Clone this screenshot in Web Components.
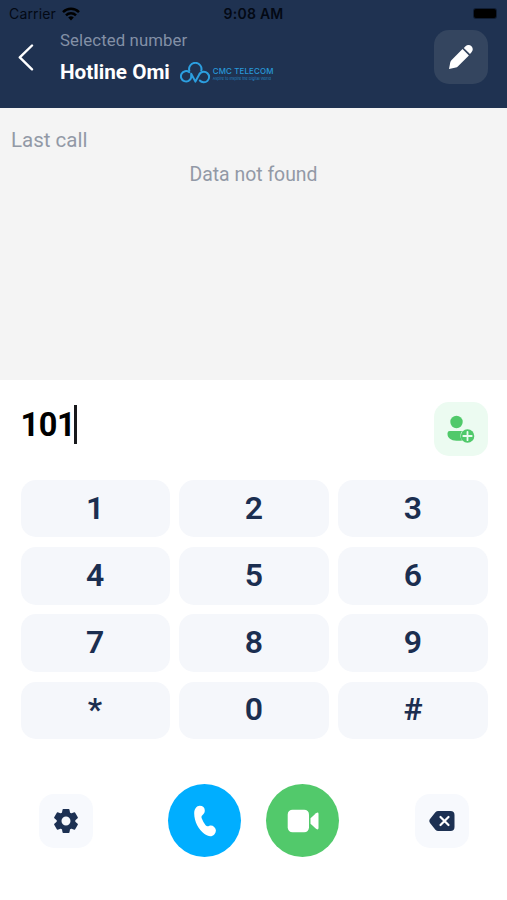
<!DOCTYPE html>
<html lang="en">
<head>
<meta charset="utf-8">
<title>Dialer</title>
<style>
body{margin:0;background:#fff;font-family:Roboto,"Liberation Sans",sans-serif}
</style>
</head>
<body>
<dialer-screen></dialer-screen>
<script>
const define = (name, css, html) => customElements.define(name, class extends HTMLElement {
  constructor() {
    super();
    const t = document.createElement('template');
    t.innerHTML = `<style>*{box-sizing:border-box}svg{display:block}${css}</style>${html}`;
    this.attachShadow({ mode: 'open' }).append(t.content.cloneNode(true));
  }
});

define('status-bar', `
  :host{display:grid;grid-template-columns:1fr auto 1fr;align-items:center;height:27px;padding:0 11px 0 9px;color:#030914;font:14px/17px Inter,"Liberation Sans",sans-serif}
  .left{display:flex;align-items:center;gap:6px;letter-spacing:.15px}
  .time{font-weight:600;letter-spacing:.25px;margin-left:2px}
  .battery{justify-self:end;width:22px;height:9px;border-radius:2px;background:#000;box-shadow:0 0 0 1px #101d33}
`, `
  <span class="left"><span>Carrier</span>
    <svg width="18" height="14" viewBox="0 0 18 14" fill="none" stroke="#000" stroke-width="2.5"><path d="M1 5.1a11.5 11.5 0 0 1 16 0M4 8.3a7.1 7.1 0 0 1 10 0"/><path d="M6.2 10.6a4 4 0 0 1 5.6 0L9 13.6z" fill="#000" stroke="none"/></svg>
  </span>
  <span class="time">9:08 AM</span><span class="battery"></span>`);

define('brand-logo', `
  :host{display:flex;align-items:center;gap:2px;color:#2899d9}
  .words{display:flex;flex-direction:column;gap:1px;white-space:nowrap;padding-top:3px}
  b{font:500 7.9px/9px Inter,sans-serif;letter-spacing:.15px}
  small{font:3.7px/4px Inter,sans-serif;opacity:.8}
`, `
  <svg width="31" height="22" viewBox="0 0 31 22" fill="none" stroke="#2c9fe0" stroke-width="2" stroke-linecap="round" stroke-linejoin="round"><path d="M9.300 10.200A5.200 5.200 0 1 0 11.200 15.500V11.800L15.400 19.600 19.800 11.600"/><path d="M9.300 8.600A6.200 6.200 0 1 1 21.300 8.600"/><path d="M19.800 18.500A5.300 5.300 0 1 0 19.800 11.600"/></svg>
  <span class="words"><b>CMC TELECOM</b><small>Aspire to Inspire the Digital World</small></span>`);

define('icon-button', `
  :host{display:flex;align-items:center;justify-content:center;width:54px;height:54px;border-radius:15px;background:var(--bg,#f7f9fd)}
`, `<slot></slot>`);

define('round-button', `
  :host{display:flex;align-items:center;justify-content:center;width:73px;height:73px;border-radius:50%;background:var(--bg)}
`, `<slot></slot>`);

define('app-header', `
  :host{display:flex;flex-direction:column;height:108px;background:#1f3251}
  .row{display:flex;align-items:flex-start;padding:3px 19.5px 0 18px}
  .back{margin-top:14px}
  .titles{flex:1;margin-left:26px}
  .label{font-size:16.8px;line-height:20px;color:#8390a6;letter-spacing:.1px}
  .name{display:flex;align-items:center;height:25px;margin-top:10px;gap:10px}
  .name b{font-size:20.700px;line-height:25px;color:#fff;white-space:nowrap;font-weight:700}
  icon-button{--bg:#34455f}
`, `
  <status-bar></status-bar>
  <div class="row">
    <svg class="back" width="16" height="27" viewBox="0 0 16 27" fill="none" stroke="#fff" stroke-width="2.4" stroke-linecap="round" stroke-linejoin="round"><path d="M14 1.5 1.8 13.4 14 25.3"/></svg>
    <div class="titles"><div class="label">Selected number</div><div class="name"><b>Hotline Omi</b><brand-logo></brand-logo></div></div>
    <icon-button><svg width="26" height="26" viewBox="0 0 26 26" fill="#fff"><path d="M1 25 2.300 18.200Q2.600 17 3.400 16.200L14.500 5.100l6.400 6.400L9.800 22.500q-.8.8-1.900 1.100z"/><path d="M15.800 3.900 17.500 2.300c1.800-1.700 4.300-1.700 6 0s1.700 4.200 0 6l-1.500 1.700z"/></svg></icon-button>
  </div>`);

define('call-history', `
  :host{display:block;height:272px;padding:19px 11px 0;background:#f4f4f4;color:#9299a6}
  .title{font-size:20.500px;line-height:26px}
  .empty{font-size:19.400px;line-height:24px;margin-top:10px;text-align:center}
`, `<div class="title">Last call</div><div class="empty">Data not found</div>`);

define('number-field', `
  :host{display:flex;align-items:center;justify-content:space-between;height:54px}
  .value{display:flex;align-items:center;margin-top:-10px;font-size:32.500px;line-height:39px;font-weight:700;color:#000;letter-spacing:-.4px}
  .value span:first-child{padding-top:2px;line-height:37px}
  .caret{width:3px;height:39px;margin-left:-1.500px;background:#18191c}
  icon-button{--bg:#ecfbf1}
`, `
  <span class="value"><span>101</span><span class="caret"></span></span>
  <icon-button><svg width="28" height="28" viewBox="0 0 28 28" fill="#50c96a"><circle cx="9.500" cy="7" r="6.200"/><path d="M2.700 16H15a7.500 7.500 0 0 0 .2 9.600Q13 26 9.500 25.800C4 25.500.5 23 .5 19v-.8Q.5 16 2.700 16z"/><circle cx="20.500" cy="21" r="6.800"/><path d="M20.500 16.800v8.400M16.300 21h8.400" stroke="#ecfbf1" stroke-width="1.800" stroke-linecap="round"/></svg></icon-button>`);

define('dial-key', `
  :host{display:flex;align-items:center;justify-content:center;height:57.200px;padding-bottom:2px;border-radius:15px;background:#f5f7fb;color:#1b2e50;font-size:32px;line-height:38px;font-weight:600}
`, `<slot></slot>`);

define('dial-pad', `
  :host{display:grid;grid-template-columns:repeat(3,1fr);gap:9.900px;margin-top:24.300px}
`, [...'123456789*0#'].map(k => `<dial-key>${k}</dial-key>`).join(''));

define('call-actions', `
  :host{display:flex;align-items:center;justify-content:space-between;margin:45.600px 18.500px 0 18px}
  .calls{display:flex;gap:25px}
`, `
  <icon-button><svg width="26" height="26" viewBox="0 0 26 26"><path fill="#1d3153" stroke="#1d3153" stroke-width="1.600" stroke-linejoin="round" fill-rule="evenodd" d="M10.300 1.800h5.400l.6 3.400 2 1.100 3.200-1.200 2.600 4.600-2.600 2.200v2.200l2.600 2.200-2.600 4.600-3.200-1.200-2 1.100-.6 3.400h-5.400l-.6-3.400-2-1.100-3.200 1.200-2.600-4.600 2.600-2.200v-2.200L1.900 9.700l2.600-4.600 3.200 1.200 2-1.100zM13 7.700a5.300 5.300 0 1 0 0 10.600 5.300 5.300 0 0 0 0-10.600z"/></svg></icon-button>
  <div class="calls">
    <round-button style="--bg:#00aeff"><svg width="24" height="32" viewBox="0 0 24 32" fill="#fff"><path d="M1.200 8.500C1.200 4 3.600.8 6.800.8c3 0 5 1.900 5 4.800 0 2-.8 3.400-2.200 4.500-1.200 1-1.400 2-.8 3.500.9 2.500 2.200 4.700 3.800 6.600 1 1.100 2 1.200 3.400.7 2-.7 3.700-.3 5.200 1.100 2.300 2.200 2.300 5 .1 7.400-2.400 2.600-6.200 2.200-10.100-.7C5.800 24.700 1.200 16.700 1.200 8.500z"/></svg></round-button>
    <round-button style="--bg:#52c96b"><svg width="32" height="24" viewBox="0 0 32 24" fill="#fff"><rect x=".7" y=".7" width="21.300" height="22.600" rx="4.800"/><path d="M23.500 9.200 29 4.200q2.500-1.700 2.500.8v14q0 2.500-2.500.8l-5.500-5z"/></svg></round-button>
  </div>
  <icon-button><svg width="26" height="22" viewBox="0 0 26 22"><path d="M9.200 1H21.500Q25.500 1 25.500 5v12q0 4-4 4H9.200q-1.600 0-2.800-1.300L1.200 13.200Q-.6 11 1.200 8.800L6.400 2.300Q7.600 1 9.200 1z" fill="#1d3153"/><path d="m11.500 7 8 8m0-8-8 8" stroke="#fff" stroke-width="2.200" stroke-linecap="round"/></svg></icon-button>`);

define('dialer-screen', `
  :host{display:flex;flex-direction:column;width:507px;height:900px;background:#fff;overflow:hidden}
  main{padding:22px 19.500px 0 20.500px}
`, `<app-header></app-header><call-history></call-history><main><number-field></number-field><dial-pad></dial-pad><call-actions></call-actions></main>`);
</script>
</body>
</html>
